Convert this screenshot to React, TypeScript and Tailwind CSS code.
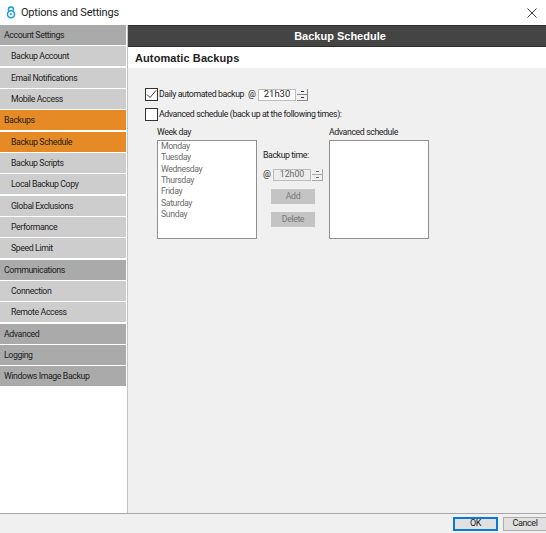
import React from "react";

const rows: [string, "head" | "sub" | "headOn" | "subOn"][] = [
  ["Account Settings", "head"],
  ["Backup Account", "sub"],
  ["Email Notifications", "sub"],
  ["Mobile Access", "sub"],
  ["Backups", "headOn"],
  ["Backup Schedule", "subOn"],
  ["Backup Scripts", "sub"],
  ["Local Backup Copy", "sub"],
  ["Global Exclusions", "sub"],
  ["Performance", "sub"],
  ["Speed Limit", "sub"],
  ["Communications", "head"],
  ["Connection", "sub"],
  ["Remote Access", "sub"],
  ["Advanced", "head"],
  ["Logging", "head"],
  ["Windows Image Backup", "head"],
];

const days = ["Monday", "Tuesday", "Wednesday", "Thursday", "Friday", "Saturday", "Sunday"];

function rowClass(k: string) {
  if (k === "head") return "bg-[#aaaaaa] pl-1";
  if (k === "sub") return "bg-[#cdcdcd] pl-[11px]";
  if (k === "headOn") return "bg-[#e58a25] pl-1";
  return "bg-[#e58a25] pl-[11px]";
}

function Spinner({ off }: { off?: boolean }) {
  return (
    <div className={`flex h-[12px] w-[11px] flex-col border-b border-r border-[#8a8a8a] ${off ? "opacity-70" : ""}`}>
      <div className="flex flex-1 items-center justify-center border-b border-[#8a8a8a]">
        <div className="h-px w-[3px] bg-[#333]" />
      </div>
      <div className="flex flex-1 items-center justify-center">
        <div className="h-px w-[3px] bg-[#333]" />
      </div>
    </div>
  );
}

function Check({ on }: { on?: boolean }) {
  return (
    <div className="flex h-[13px] w-[13px] shrink-0 items-center justify-center border border-[#333] bg-white">
      {on && (
        <svg width="11" height="11" viewBox="0 0 11 11" fill="none" stroke="#222" strokeWidth="0.9">
          <path d="M1 5.5 L4 8.5 L10 1.5" />
        </svg>
      )}
    </div>
  );
}

export default function App() {
  return (
    <div className="flex h-[533px] w-[546px] flex-col overflow-hidden bg-white text-[8.75px] tracking-[-0.4px] text-[#1c1c1c] [font-family:Roboto,Arial,sans-serif]">
      <div className="flex h-[25px] shrink-0 items-center bg-white pl-[6px] pr-[9px]">
        <svg width="10" height="13" viewBox="0 0 12 15" fill="none" stroke="#1597dc" strokeWidth="1.8">
          <path d="M3 5.5 V3.8 A3 3 0 0 1 9 3.8 V5.5" />
          <circle cx="6" cy="9.5" r="4.2" />
          <circle cx="6" cy="9.5" r="1" fill="#1597dc" strokeWidth="0.5" />
        </svg>
        <span className="ml-[5px] pt-px text-[11px] tracking-[-0.2px] text-[#222]">Options and Settings</span>
        <svg className="ml-auto" width="10" height="10" viewBox="0 0 10 10" stroke="#222" strokeWidth="0.9">
          <path d="M0.5 0.5 L9.5 9.5 M9.5 0.5 L0.5 9.5" />
        </svg>
      </div>

      <div className="flex min-h-0 flex-1">
        <nav className="flex w-[127px] shrink-0 flex-col gap-[1.33px] bg-white pr-px">
          {rows.map(([label, kind]) => (
            <div key={label} className={`flex h-[20px] shrink-0 items-center pt-px ${rowClass(kind)}`}>
              {label}
            </div>
          ))}
        </nav>

        <main className="flex min-w-0 flex-1 flex-col border-l border-[#c4c4c4] bg-[#f0f0f0]">
          <div className="flex h-[22px] shrink-0 items-center justify-center border-y border-[#2a2a2a] bg-[#444444] pl-[6px] pt-px text-[11px] font-bold tracking-normal text-white [font-family:'Liberation_Sans',sans-serif]">
            Backup Schedule
          </div>
          <div className="flex h-[21px] shrink-0 items-center bg-white pl-[7px] pt-px text-[11px] font-bold tracking-[0.1px] text-[#222] [font-family:'Liberation_Sans',sans-serif]">
            Automatic Backups
          </div>

          <div className="pl-[17px] pt-5">
            <div className="flex h-[13px] items-center">
              <Check on />
              <span className="ml-px w-[89px] shrink-0 whitespace-nowrap">Daily automated backup</span>
              <span className="w-[10px] shrink-0">@</span>
              <div className="flex h-[12px] w-[38px] items-center justify-center border border-[#bdbdbd] bg-white text-[9.5px] tracking-normal">21h30</div>
              <div className="ml-px"><Spinner /></div>
            </div>

            <div className="mt-[7px] flex h-[13px] items-center">
              <Check />
              <span className="ml-px whitespace-nowrap">Advanced schedule (back up at the following times):</span>
            </div>

            <div className="mt-[5px] ml-3 flex">
              <div className="w-[100px]">
                <div className="h-[14px] leading-[13px]">Week day</div>
                <ul className="h-[99px] border border-[#8f8f8f] bg-white pl-[3px] text-[#6d6d6d]">
                  {days.map((d) => (
                    <li key={d} className="h-[11.33px] leading-[11.33px]">{d}</li>
                  ))}
                </ul>
              </div>

              <div className="ml-[6px] w-[66px] pt-[23px]">
                <div className="h-[12px] leading-[12px]">Backup time:</div>
                <div className="mt-[7px] flex items-center">
                  <span className="w-[10px]">@</span>
                  <div className="flex h-[12px] w-[38px] items-center justify-center border border-[#bdbdbd] bg-[#ececec] tracking-normal text-[#666]">12h00</div>
                  <div className="ml-px"><Spinner off /></div>
                </div>
                <div className="mt-[8px] ml-2 flex h-[15px] w-[44px] items-center justify-center bg-[#c4c4c4] text-[#777]">Add</div>
                <div className="mt-[8px] ml-2 flex h-[15px] w-[44px] items-center justify-center bg-[#c4c4c4] text-[#777]">Delete</div>
              </div>

              <div className="w-[100px]">
                <div className="h-[14px] leading-[13px]">Advanced schedule</div>
                <div className="h-[99px] border border-[#8f8f8f] bg-white" />
              </div>
            </div>
          </div>
        </main>
      </div>

      <div className="flex h-[20px] shrink-0 items-center justify-end gap-[5px] border-t border-[#a8a8a8] bg-[#f0f0f0]">
        <button className="h-[14px] w-[45px] border-2 border-[#0a78d7] bg-[#e1e1e1] text-[9px] leading-none">OK</button>
        <button className="-mr-px h-[14px] w-[44px] border border-[#adadad] bg-[#e1e1e1] text-[9px] leading-none">Cancel</button>
      </div>
    </div>
  );
}
